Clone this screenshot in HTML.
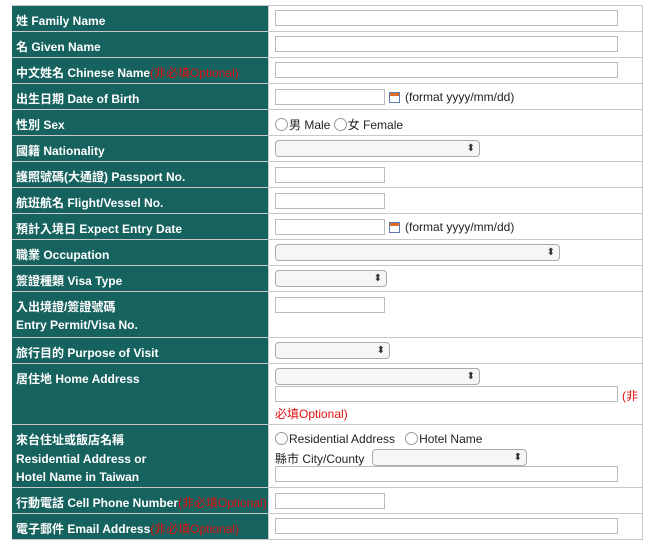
<!DOCTYPE html>
<html><head><meta charset="utf-8"><style>
body{margin:0;background:#fff;width:650px;height:549px;overflow:hidden;font-family:"Liberation Sans","Noto Sans CJK TC",sans-serif;}
.r{position:absolute;left:12px;width:631px;border-bottom:1px solid #c8c8c8;}
.l{position:absolute;left:0;top:0;bottom:0;width:257px;background:#16625f;color:#fff;font-weight:bold;font-size:12px;box-sizing:border-box;padding:6px 0 0 4px;line-height:18px;border-right:1px solid #c8c8c8;}
.v{position:absolute;left:258px;top:0;bottom:0;right:0;border-right:1px solid #c8c8c8;font-size:12px;color:#222;}
.o{color:#e01010;font-weight:normal;}
.t{position:absolute;height:16px;border:1px solid #bbb;background:#fff;box-sizing:border-box;}
.s{position:absolute;height:17px;border:1px solid #aaa;border-radius:4px;background:#f6f6f6;box-sizing:border-box;}
.s:after{content:"⬍";position:absolute;right:4px;top:0;font-size:10px;line-height:15px;color:#333;}
.tx{position:absolute;white-space:nowrap;}
.rad{display:inline-block;width:11px;height:11px;border:1px solid #999;border-radius:50%;vertical-align:-2px;margin-right:1px;}
.cal{position:absolute;width:11px;height:11px;border:1px solid #5a7ab0;background:linear-gradient(#e06a2a 0 3px,#fff 3px);box-sizing:border-box;}
</style></head><body>
<div style="position:absolute;left:12px;top:5px;width:631px;border-top:1px solid #c8c8c8"></div>

<div class="r" style="top:6px;height:25px"><div class="l">姓 Family Name</div><div class="v"><div class="t" style="left:5px;top:4px;width:343px"></div></div></div>
<div class="r" style="top:32px;height:25px"><div class="l">名 Given Name</div><div class="v"><div class="t" style="left:5px;top:4px;width:343px"></div></div></div>
<div class="r" style="top:58px;height:25px"><div class="l">中文姓名 Chinese Name<span class="o">(非必填Optional)</span></div><div class="v"><div class="t" style="left:5px;top:4px;width:343px"></div></div></div>
<div class="r" style="top:84px;height:25px"><div class="l">出生日期 Date of Birth</div><div class="v"><div class="t" style="left:5px;top:5px;width:110px"></div><div class="cal" style="left:119px;top:8px"></div><span class="tx" style="left:135px;top:6px">(format yyyy/mm/dd)</span></div></div>
<div class="r" style="top:110px;height:25px"><div class="l">性別 Sex</div><div class="v"><span class="tx" style="left:5px;top:6px"><span class="rad"></span>男 Male <span class="rad"></span>女 Female</span></div></div>
<div class="r" style="top:136px;height:25px"><div class="l">國籍 Nationality</div><div class="v"><div class="s" style="left:5px;top:4px;width:205px"></div></div></div>
<div class="r" style="top:162px;height:25px"><div class="l">護照號碼(大通證) Passport No.</div><div class="v"><div class="t" style="left:5px;top:5px;width:110px"></div></div></div>
<div class="r" style="top:188px;height:25px"><div class="l">航班航名 Flight/Vessel No.</div><div class="v"><div class="t" style="left:5px;top:5px;width:110px"></div></div></div>
<div class="r" style="top:214px;height:25px"><div class="l">預計入境日 Expect Entry Date</div><div class="v"><div class="t" style="left:5px;top:5px;width:110px"></div><div class="cal" style="left:119px;top:8px"></div><span class="tx" style="left:135px;top:6px">(format yyyy/mm/dd)</span></div></div>
<div class="r" style="top:240px;height:25px"><div class="l">職業 Occupation</div><div class="v"><div class="s" style="left:5px;top:4px;width:285px"></div></div></div>
<div class="r" style="top:266px;height:25px"><div class="l">簽證種類 Visa Type</div><div class="v"><div class="s" style="left:5px;top:4px;width:112px"></div></div></div>
<div class="r" style="top:292px;height:45px"><div class="l">入出境證/簽證號碼<br>Entry Permit/Visa No.</div><div class="v"><div class="t" style="left:5px;top:5px;width:110px"></div></div></div>
<div class="r" style="top:338px;height:25px"><div class="l">旅行目的 Purpose of Visit</div><div class="v"><div class="s" style="left:5px;top:4px;width:115px"></div></div></div>
<div class="r" style="top:364px;height:60px"><div class="l">居住地 Home Address</div><div class="v"><div class="s" style="left:5px;top:4px;width:205px"></div><div class="t" style="left:5px;top:22px;width:343px"></div><span class="tx o" style="left:352px;top:23px">(非</span><span class="tx o" style="left:5px;top:41px">必填Optional)</span></div></div>
<div class="r" style="top:425px;height:62px"><div class="l" style="line-height:18.5px">來台住址或飯店名稱<br>Residential Address or<br>Hotel Name in Taiwan</div><div class="v"><span class="tx" style="left:5px;top:7px"><span class="rad"></span>Residential Address &nbsp; <span class="rad"></span>Hotel Name</span><span class="tx" style="left:5px;top:25px">縣市 City/County</span><div class="s" style="left:102px;top:24px;width:155px"></div><div class="t" style="left:5px;top:41px;width:343px"></div></div></div>
<div class="r" style="top:488px;height:25px"><div class="l">行動電話 Cell Phone Number<span class="o">(非必填Optional)</span></div><div class="v"><div class="t" style="left:5px;top:5px;width:110px"></div></div></div>
<div class="r" style="top:514px;height:25px"><div class="l">電子郵件 Email Address<span class="o">(非必填Optional)</span></div><div class="v"><div class="t" style="left:5px;top:4px;width:343px"></div></div></div>
</body></html>
